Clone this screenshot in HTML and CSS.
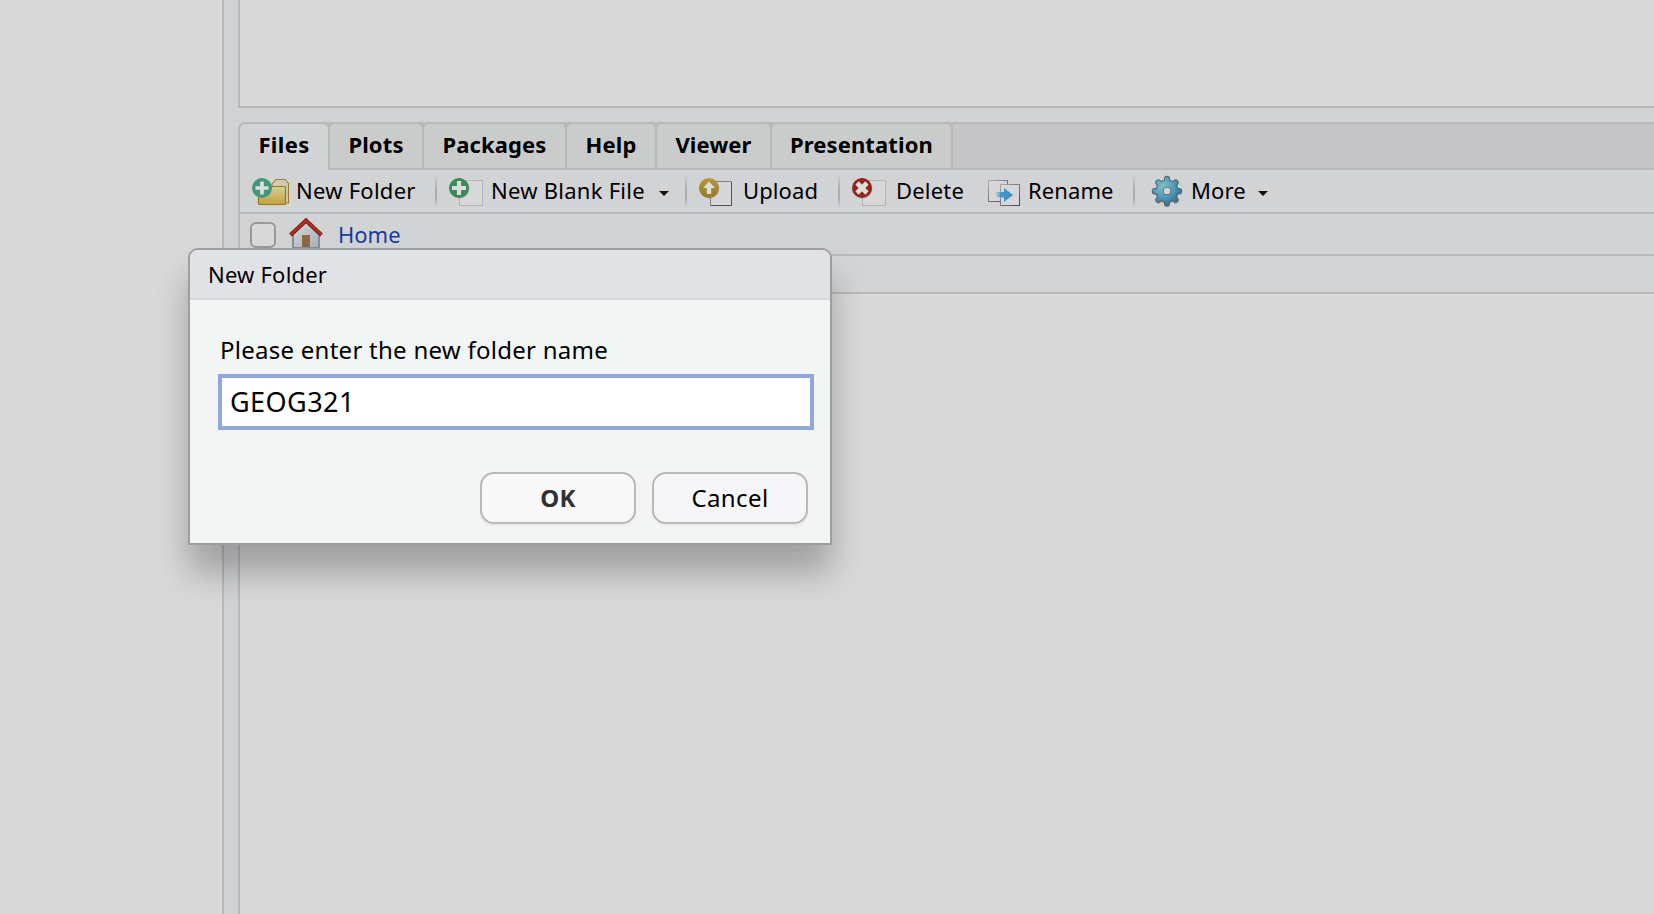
FILE: index.html
```
<!DOCTYPE html>
<html lang="en">
<head>
<meta charset="utf-8">
<title>Files</title>
<link rel="stylesheet" href="styles.css">
</head>
<body>
<div class="workspace">
  <aside class="side-pane"></aside>
  <main class="column">
    <section class="upper-pane"></section>
    <section class="files-pane">
      <nav class="tabs">
        <div class="tab tab-files active"><span>Files</span></div>
        <div class="tab tab-plots"><span>Plots</span></div>
        <div class="tab tab-packages"><span>Packages</span></div>
        <div class="tab tab-help"><span>Help</span></div>
        <div class="tab tab-viewer"><span>Viewer</span></div>
        <div class="tab tab-presentation"><span>Presentation</span></div>
        <div class="tab-rest"></div>
      </nav>
      <div class="toolbar">
        <div class="tool tool-folder">
          <svg class="icon" width="40" height="32" viewBox="0 0 40 32">
            <defs><linearGradient id="gold" x1="0" y1="0" x2="0" y2="1"><stop offset="0" stop-color="#d6cf9c"/><stop offset=".5" stop-color="#cdb86a"/><stop offset="1" stop-color="#c2a040"/></linearGradient></defs>
            <path d="M20 9 L24 4.5 H33 L36.5 8.5 V28 H20 Z" fill="#cfcbb6" stroke="#a07e25" stroke-width="1.1"/>
            <rect x="6.500" y="11.500" width="27" height="18" rx="1" fill="url(#gold)" stroke="#9b7817" stroke-width="1.2"/>
            <circle cx="10" cy="13" r="10" fill="#43967a"/>
            <path d="M10 6.500V19.500M3.500 13H16.500" stroke="#dbe0dd" stroke-width="3.600"/>
          </svg>
          <span>New Folder</span>
        </div>
        <i class="sep"></i>
        <div class="tool tool-blank">
          <svg class="icon" width="40" height="32" viewBox="0 0 40 32">
            <rect x="10.500" y="5.500" width="23" height="25" fill="#d8d8d8" stroke="#b1b6be"/>
            <circle cx="10.500" cy="13.500" r="10" fill="#777" opacity=".35"/>
            <circle cx="10" cy="13" r="10" fill="#3e8959"/>
            <path d="M10 6V20M3 13H17" stroke="#dbdfdb" stroke-width="4.200"/>
          </svg>
          <span>New Blank File</span>
          <b class="caret"></b>
        </div>
        <i class="sep"></i>
        <div class="tool tool-upload">
          <svg class="icon" width="40" height="32" viewBox="0 0 40 32">
            <defs><linearGradient id="amber" x1="0" y1="0" x2="0" y2="1"><stop offset="0" stop-color="#b5973d"/><stop offset="1" stop-color="#957a22"/></linearGradient></defs>
            <rect x="11.500" y="6.500" width="21" height="24" fill="#d7d7d9" stroke="#7e8286"/>
            <path d="M12 30.500H32.500V7" fill="none" stroke="#4e555b"/>
            <circle cx="10.500" cy="13.500" r="10" fill="#777" opacity=".3"/>
            <circle cx="10" cy="13" r="10" fill="url(#amber)"/>
            <path d="M10 6.500L16 13H12.200V19H7.800V13H4Z" fill="#dcdcd8"/>
          </svg>
          <span>Upload</span>
        </div>
        <i class="sep"></i>
        <div class="tool tool-delete">
          <svg class="icon" width="40" height="32" viewBox="0 0 40 32">
            <rect x="10.500" y="5.500" width="23" height="25" fill="#d8d8d8" stroke="#b1b5b8"/>
            <circle cx="10.500" cy="13.500" r="10" fill="#777" opacity=".35"/>
            <circle cx="10" cy="13" r="10" fill="#8f261c"/>
            <path d="M5 8L15 18M15 8L5 18" stroke="#dedcdc" stroke-width="4.600"/>
          </svg>
          <span>Delete</span>
        </div>
        <div class="tool tool-rename">
          <svg class="icon" width="40" height="32" viewBox="0 0 40 32">
            <defs>
              <linearGradient id="sheet" x1="0" y1="0" x2="1" y2="1"><stop offset="0" stop-color="#a9abae"/><stop offset="1" stop-color="#42474c"/></linearGradient>
              <linearGradient id="blue"><stop offset="0" stop-color="#4a96cc" stop-opacity="0"/><stop offset=".35" stop-color="#4495cc"/><stop offset="1" stop-color="#3b8cc6"/></linearGradient>
            </defs>
            <rect x=".5" y="5.500" width="19" height="21" fill="#d7d7d9" stroke="url(#sheet)"/>
            <rect x="12.500" y="9.500" width="19" height="21" fill="#d7d7d9" stroke="url(#sheet)"/>
            <path d="M7 17H16V13L25 20L16 27V22.500H7Z" fill="url(#blue)"/>
          </svg>
          <span>Rename</span>
        </div>
        <i class="sep"></i>
        <div class="tool tool-more">
          <svg class="icon" width="34" height="34" viewBox="-17 -17 34 34">
            <defs>
              <radialGradient id="steel" gradientUnits="userSpaceOnUse" cx="-4" cy="-5" r="20"><stop offset="0" stop-color="#83bfc8"/><stop offset=".5" stop-color="#559fba"/><stop offset="1" stop-color="#31719e"/></radialGradient>
              <g id="teeth">
                <path d="M0 -12.200V12.200M-12.200 0H12.200M-8.600 -8.600L8.600 8.600M8.600 -8.600L-8.600 8.600" fill="none" stroke-linecap="round"/>
                <circle r="8.500"/>
              </g>
            </defs>
            <use href="#teeth" y="1" stroke="#9b9fa3" stroke-width="6" fill="#9b9fa3"/>
            <use href="#teeth" stroke="#4b6570" stroke-width="6" fill="#4b6570"/>
            <use href="#teeth" stroke="url(#steel)" stroke-width="4.200" fill="url(#steel)"/>
            <circle r="3.800" fill="#d0d3d5" stroke="#5b7580" stroke-width="1.100"/>
          </svg>
          <span>More</span>
          <b class="caret"></b>
        </div>
      </div>
      <div class="path-row">
        <div class="checkbox"></div>
        <svg class="home-icon" width="36" height="32" viewBox="0 0 36 32">
          <defs><linearGradient id="wall" x1="0" y1="0" x2="1" y2="1"><stop offset="0" stop-color="#d2d4d9"/><stop offset="1" stop-color="#aeb1b8"/></linearGradient></defs>
          <path d="M5 16L18 4L31 16V30H5Z" fill="url(#wall)" stroke="#858c95" stroke-width="2"/>
          <rect x="14" y="17" width="8" height="12" fill="#8c6844"/>
          <path d="M2.500 17L18 2.500L33.500 17" fill="none" stroke="#651a12" stroke-width="4"/>
          <path d="M2.500 16.700L18 2.500L33.500 16.700" fill="none" stroke="#b42e1f" stroke-width="2.500"/>
        </svg>
        <a class="home-link">Home</a>
      </div>
      <div class="list-head"></div>
      <div class="list"></div>
    </section>
  </main>
</div>
<div class="dialog">
  <div class="dialog-title"><span>New Folder</span></div>
  <div class="dialog-body">
    <label class="prompt">Please enter the new folder name</label>
    <div class="field"><span>GEOG321</span></div>
    <div class="actions">
      <button class="button ok">OK</button>
      <button class="button cancel">Cancel</button>
    </div>
  </div>
</div>
</body>
</html>
```
FILE: styles.css
```
* { box-sizing: border-box; }
body {
  margin: 0;
  height: 914px;
  overflow: hidden;
  background: #d1d2d4;
  color: #000;
  font-family: "Noto Sans", "Open Sans", sans-serif;
  font-size: 22px;
  line-height: 30px;
  white-space: nowrap;
}
.workspace { display: flex; gap: 14px; height: 914px; }
.side-pane { width: 224px; flex: none; background: #d9d9d9; border-right: 2px solid #b7b9bb; }
.column { flex: 1; min-width: 0; display: flex; flex-direction: column; gap: 14px; }
.upper-pane { height: 108px; flex: none; background: #d9d9d9; border: solid #b7b9bb; border-width: 0 0 2px 2px; }
.files-pane { flex: 1; display: flex; flex-direction: column; border: solid #b7b9bb; border-width: 2px 0 0 2px; border-top-left-radius: 7px; overflow: hidden; }

.tabs { display: flex; height: 46px; flex: none; background: #b7b9bb; }
.tab {
  flex: none; height: 44px; margin-right: 2px; background: #cacccb;
  border-radius: 5px 5px 0 0; font-weight: 700; line-height: 40px; text-align: center;
  letter-spacing: .12px;
}
.tab.active { height: 46px; background: #d2d3d5; letter-spacing: .35px; }
.tab-files { width: 88px; }
.tab-plots { width: 92px; }
.tab-packages { width: 141px; }
.tab-help { width: 88px; }
.tab-viewer { width: 113px; }
.tab-presentation { width: 179px; }
.tab-rest { flex: 1; height: 44px; background: #c5c5c7; }

.toolbar { display: flex; align-items: center; height: 44px; flex: none; background: #d2d3d5; border-bottom: 2px solid #b7b9bb; }
.tool { display: flex; align-items: center; height: 42px; flex: none; }
.icon { flex: none; display: block; }
.tool span { padding-bottom: 2px; letter-spacing: .1px; }
.tool-folder { margin-left: 12px; width: 183px; }
.tool-folder span { margin-left: 4px; letter-spacing: .25px; }
.tool-blank { margin-left: 12px; width: 236px; }
.tool-blank span { margin-left: 2px; width: 168px; letter-spacing: .26px; }
.tool-upload { margin-left: 12px; width: 139px; }
.tool-upload span { margin-left: 4px; }
.tool-delete { margin-left: 12px; width: 136px; }
.tool-delete span { margin-left: 4px; letter-spacing: .2px; }
.tool-rename { width: 145px; }
.tool-rename span { margin-left: 0; }
.tool-more { margin-left: 15px; }
.tool-more span { margin-left: 7px; width: 67px; }
.caret { border: solid transparent; border-width: 5px 5px 0; border-top-color: #111; margin-top: 5px; }
.sep {
  width: 2px; height: 34px; flex: none;
  background: linear-gradient(#b8babc00, #adafb0 40%, #a8aaab 70%, #b8babc00);
}
.path-row { display: flex; align-items: center; height: 42px; flex: none; padding-left: 10px; background: #d2d3d5; border-bottom: 2px solid #b7b9bb; }
.checkbox { width: 26px; height: 26px; margin-top: 2px; border: 2px solid #989898; border-radius: 6px; background: #d9d9d9; }
.home-icon { margin: -1px 0 0 12px; }
.home-link { margin-left: 14px; color: #1a3a9f; }
.list-head { height: 38px; flex: none; background: #d2d4d5; border-bottom: 2px solid #b7b9bb; }
.list { flex: 1; background: #d9d9d9; }

/* modal floating above the workspace */
.dialog {
  position: absolute; left: 188px; top: 248px; width: 644px; height: 297px;
  display: flex; flex-direction: column;
  border: 2px solid #9d9e9f; border-radius: 10px 10px 0 0; overflow: hidden;
  background: #f3f5f4; box-shadow: 0 28px 34px rgba(0, 0, 0, .26);
}
.dialog-title { height: 50px; flex: none; padding: 9px 0 0 18px; background: #e1e2e6; border-bottom: 2px solid #d8d9de; letter-spacing: .2px; }
.dialog-body { padding: 35px 16px 0 28px; display: flex; flex-direction: column; }
.prompt { height: 39px; padding-left: 2px; font-size: 24px; letter-spacing: .26px; }
.field { height: 56px; display: flex; align-items: center; padding-left: 8px; border: 4px solid #8fa8d9; background: #fff; font-size: 27px; letter-spacing: .45px; }
.actions { display: flex; justify-content: flex-end; gap: 16px; margin-top: 42px; padding-right: 6px; }
.button {
  width: 156px; height: 52px; padding: 0; border: 2px solid #b9b9b9; border-radius: 14px;
  background: #f6f6f8; box-shadow: 0 2px 2px rgba(0, 0, 0, .05);
  font-family: inherit; font-size: 24px; line-height: 46px; color: #000; letter-spacing: .4px;
}
.ok { font-weight: 700; color: #303030; background: #f8f8f8; }
```
